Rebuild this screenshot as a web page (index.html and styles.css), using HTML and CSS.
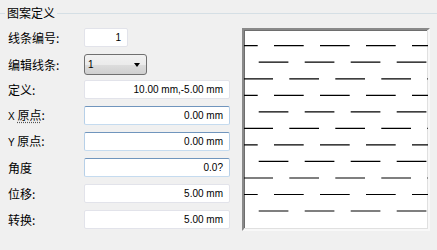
FILE: index.html
```html
<!DOCTYPE html>
<html lang="zh-CN">
<head>
    <meta charset="UTF-8">
    <title>图案定义</title>
    <link rel="stylesheet" href="styles.css">
</head>
<body>
    <fieldset class="group">
        <legend>图案定义</legend>
        <div class="content">
            <div class="form">
                <div class="row">
                    <label>线条编号:</label>
                    <div class="field spin">1</div>
                </div>
                <div class="row row-combo">
                    <label>编辑线条:</label>
                    <div class="combo"><span>1</span><i class="arrow"></i></div>
                </div>
                <div class="row">
                    <label>定义:</label>
                    <div class="field">10.00 mm,-5.00 mm</div>
                </div>
                <div class="row">
                    <label><span class="latin">X</span> <u>原点</u>:</label>
                    <div class="field active">0.00 mm</div>
                </div>
                <div class="row">
                    <label><span class="latin">Y</span> 原点:</label>
                    <div class="field active">0.00 mm</div>
                </div>
                <div class="row">
                    <label>角度</label>
                    <div class="field active">0.0?</div>
                </div>
                <div class="row">
                    <label>位移:</label>
                    <div class="field">5.00 mm</div>
                </div>
                <div class="row">
                    <label>转换:</label>
                    <div class="field">5.00 mm</div>
                </div>
            </div>
            <div class="preview">
                <svg width="184" height="199" viewBox="0 0 184 199">
                    <g stroke="#000" stroke-width="1.2" stroke-dasharray="29.7 16.3">
                        <line x1="0" x2="184" y1="15.7" y2="15.7" stroke-dashoffset="16"/>
                        <line x1="0" x2="184" y1="32.2" y2="32.2" stroke-dashoffset="31.3"/>
                        <line x1="0" x2="184" y1="48.8" y2="48.8" stroke-dashoffset="0.7"/>
                        <line x1="0" x2="184" y1="65.3" y2="65.3" stroke-dashoffset="16"/>
                        <line x1="0" x2="184" y1="81.8" y2="81.8" stroke-dashoffset="31.3"/>
                        <line x1="0" x2="184" y1="98.4" y2="98.4" stroke-dashoffset="0.7"/>
                        <line x1="0" x2="184" y1="114.9" y2="114.9" stroke-dashoffset="16"/>
                        <line x1="0" x2="184" y1="131.4" y2="131.4" stroke-dashoffset="31.3"/>
                        <line x1="0" x2="184" y1="148" y2="148" stroke-dashoffset="0.7"/>
                        <line x1="0" x2="184" y1="164.5" y2="164.5" stroke-dashoffset="16"/>
                        <line x1="0" x2="184" y1="181" y2="181" stroke-dashoffset="31.3"/>
                    </g>
                </svg>
            </div>
        </div>
    </fieldset>
</body>
</html>
```

FILE: styles.css
```css
body {
    margin: 0;
    background-color: #f0f0f0;
    font-family: "Noto Sans CJK SC", sans-serif;
    font-size: 12px;
    color: #000;
}
.group {
    margin: 5px 0 0 0;
    padding: 7px 7px 0 8px;
    min-width: 0;
    border: none;
    border-top: 1px solid #d5dfe5;
}
.group legend {
    margin-left: -3px;
    padding: 0 2px;
    line-height: 16px;
}
.content {
    display: flex;
    align-items: flex-start;
}
.form {
    width: 222px;
}
.row {
    display: flex;
    align-items: center;
    height: 19px;
    margin-bottom: 7px;
}
.row-combo {
    height: 21px;
    margin-bottom: 5px;
}
.row label {
    width: 76px;
    line-height: 19px;
    white-space: nowrap;
}
.row label u {
    text-decoration: underline dotted #555;
    text-underline-offset: 2px;
}
.latin {
    font-family: "Liberation Sans", sans-serif;
    font-size: 10px;
}
.field {
    box-sizing: border-box;
    width: 146px;
    height: 19px;
    padding: 0 6px;
    background-color: white;
    border: 1px solid #e2e3ea;
    border-radius: 2px;
    font-family: "Liberation Sans", sans-serif;
    font-size: 10px;
    line-height: 17px;
    text-align: right;
}
.field.active {
    border-color: #7095bd #b7d0e8 #c5dbef #b7d0e8;
}
.spin {
    width: 44px;
}
.combo {
    box-sizing: border-box;
    width: 63px;
    height: 21px;
    padding: 0 6px 0 3px;
    display: flex;
    align-items: center;
    justify-content: space-between;
    border: 1px solid #707070;
    border-radius: 3px;
    background: linear-gradient(#f2f2f2, #ebebeb 50%, #dddddd 51%, #cfcfcf);
    font-family: "Liberation Sans", sans-serif;
    font-size: 10px;
}
.arrow {
    width: 0;
    height: 0;
    border-left: 3.5px solid transparent;
    border-right: 3.5px solid transparent;
    border-top: 4px solid #000;
}
.preview {
    margin-left: 12px;
    width: 184px;
    height: 199px;
    background-color: white;
    border: 2px solid;
    border-color: #8a8a8a #f8f8f8 #f8f8f8 #8a8a8a;
    box-shadow: inset -1px -1px 0 #e0e0e0, inset 1px 1px 0 #6e6e6e;
}
.preview svg {
    display: block;
}
```
